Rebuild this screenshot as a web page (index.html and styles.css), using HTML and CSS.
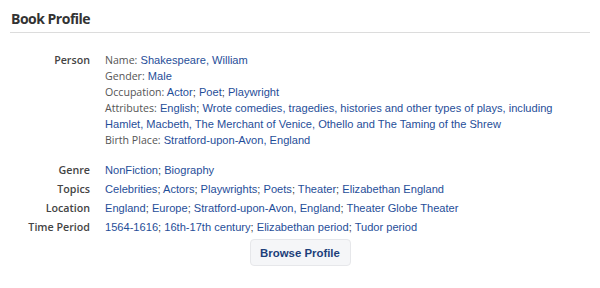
FILE: index.html
```html
<!DOCTYPE html>
<html lang="en">
<head>
    <meta charset="UTF-8">
    <meta name="viewport" content="width=device-width, initial-scale=1.0">
    <title>Book Profile</title>
    <link rel="stylesheet" href="styles.css">
</head>
<body>
    <div class="profile">
        <h2 class="profile-title">Book Profile</h2>

        <div class="profile-grid">
            <div class="label">Person</div>
            <div class="value person">
                <div><span class="key">Name:</span> <a href="#">Shakespeare, William</a></div>
                <div><span class="key">Gender:</span> <a href="#">Male</a></div>
                <div><span class="key">Occupation:</span> <a href="#">Actor</a>; <a href="#">Poet</a>; <a href="#">Playwright</a></div>
                <div><span class="key">Attributes:</span> <a href="#">English</a>; <a href="#">Wrote comedies, tragedies, histories and other types of plays, including Hamlet, Macbeth, The Merchant of Venice, Othello and The Taming of the Shrew</a></div>
                <div><span class="key">Birth Place:</span> <a href="#">Stratford-upon-Avon, England</a></div>
            </div>

            <div class="label">Genre</div>
            <div class="value"><a href="#">NonFiction</a>; <a href="#">Biography</a></div>

            <div class="label">Topics</div>
            <div class="value"><a href="#">Celebrities</a>; <a href="#">Actors</a>; <a href="#">Playwrights</a>; <a href="#">Poets</a>; <a href="#">Theater</a>; <a href="#">Elizabethan England</a></div>

            <div class="label">Location</div>
            <div class="value"><a href="#">England</a>; <a href="#">Europe</a>; <a href="#">Stratford-upon-Avon, England</a>; <a href="#">Theater Globe Theater</a></div>

            <div class="label">Time Period</div>
            <div class="value"><a href="#">1564-1616</a>; <a href="#">16th-17th century</a>; <a href="#">Elizabethan period</a>; <a href="#">Tudor period</a></div>
        </div>

        <div class="actions">
            <button class="browse-btn">Browse Profile</button>
        </div>
    </div>
</body>
</html>
```

FILE: styles.css
```css
body {
    margin: 0;
    background: #ffffff;
    font-family: 'Liberation Sans', Arial, sans-serif;
    font-size: 11.1px;
    color: #444;
}

.profile {
    padding: 0 10px;
}

.profile-title {
    margin: 0;
    padding: 9px 0 4px 1px;
    font-family: 'Open Sans', sans-serif;
    font-size: 14px;
    font-weight: 700;
    letter-spacing: -0.5px;
    color: #333;
    border-bottom: 1px solid #dcdcdc;
}

.profile-grid {
    display: grid;
    grid-template-columns: 80px 1fr;
    column-gap: 15px;
    row-gap: 3px;
    margin-top: 19px;
    line-height: 16px;
}

.label {
    text-align: right;
    font-family: 'Open Sans', sans-serif;
    font-size: 10.7px;
    font-weight: 600;
    color: #444;
    white-space: nowrap;
}

.key {
    font-family: 'Open Sans', sans-serif;
    font-size: 10.6px;
    color: #555;
}

.person {
    margin-bottom: 11px;
}

.value a {
    color: #1f4e99;
    text-decoration: none;
}

.actions {
    text-align: center;
    margin-top: 4px;
}

.browse-btn {
    width: 101px;
    height: 27px;
    padding: 0;
    font-family: 'Liberation Sans', Arial, sans-serif;
    font-size: 11.4px;
    font-weight: bold;
    color: #1d3f7a;
    background: #f5f6f8;
    border: 1px solid #e6e7ea;
    border-radius: 4px;
}
```
